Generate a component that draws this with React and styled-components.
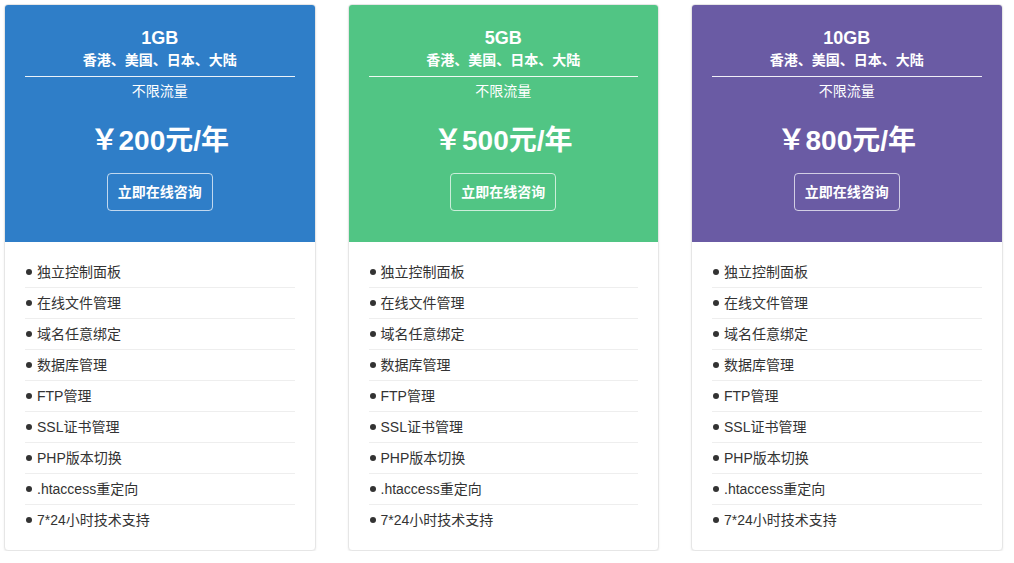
import React from 'react';
import styled, { createGlobalStyle } from 'styled-components';

const GlobalStyle = createGlobalStyle`
  body {
    margin: 0;
    background: #fff;
    font-family: "Liberation Sans", Arial, "Noto Sans CJK SC", sans-serif;
    color: #333;
  }
`;

const Page = styled.div`
  display: flex;
  gap: 32px;
  padding: 4px 0 0 4px;
`;

const Card = styled.div`
  width: 311.5px;
  box-sizing: border-box;
  border: 1px solid #e6e6e6;
  border-radius: 4px;
  box-shadow: 0 1px 2px rgba(0, 0, 0, 0.08);
  background: #fff;
  overflow: hidden;
`;

const Head = styled.div`
  background: ${p => p.$color};
  color: #fff;
  text-align: center;
  padding: 22px 20px 31px;
`;

const Size = styled.div`
  font-size: 18px;
  font-weight: bold;
  line-height: 22px;
`;

const Region = styled.div`
  font-size: 14px;
  font-weight: bold;
  line-height: 22px;
  padding-bottom: 5px;
  border-bottom: 1px solid rgba(255, 255, 255, 0.9);
`;

const Traffic = styled.div`
  font-size: 14px;
  line-height: 22px;
  margin-top: 3px;
`;

const Price = styled.div`
  font-size: 28px;
  font-weight: bold;
  line-height: 40px;
  margin-top: 19px;
`;

const Button = styled.a`
  display: inline-block;
  margin-top: 12px;
  height: 38px;
  line-height: 36px;
  box-sizing: border-box;
  padding: 0 10px;
  border: 1px solid rgba(255, 255, 255, 0.7);
  border-radius: 4px;
  font-size: 14px;
  font-weight: bold;
  color: #fff;
  cursor: pointer;
`;

const List = styled.ul`
  list-style: none;
  margin: 0;
  padding: 15px 20px 15px;
`;

const Item = styled.li`
  height: 30px;
  line-height: 30px;
  font-size: 14px;
  color: #333;
  border-bottom: 1px solid #eee;
  &:last-child {
    border-bottom: none;
  }
  &::before {
    content: "";
    display: inline-block;
    width: 6px;
    height: 6px;
    border-radius: 50%;
    background: #333;
    margin: 0 5px 2px 1px;
    vertical-align: middle;
  }
`;

const features = [
  '独立控制面板',
  '在线文件管理',
  '域名任意绑定',
  '数据库管理',
  'FTP管理',
  'SSL证书管理',
  'PHP版本切换',
  '.htaccess重定向',
  '7*24小时技术支持',
];

const plans = [
  { size: '1GB', price: '200', color: '#2f7ec8' },
  { size: '5GB', price: '500', color: '#51c584' },
  { size: '10GB', price: '800', color: '#6a5ba4' },
];

export default function App() {
  return (
    <>
      <GlobalStyle />
      <Page>
        {plans.map(plan => (
          <Card key={plan.size}>
            <Head $color={plan.color}>
              <Size>{plan.size}</Size>
              <Region>香港、美国、日本、大陆</Region>
              <Traffic>不限流量</Traffic>
              <Price>￥{plan.price}元/年</Price>
              <Button>立即在线咨询</Button>
            </Head>
            <List>
              {features.map(f => (
                <Item key={f}>{f}</Item>
              ))}
            </List>
          </Card>
        ))}
      </Page>
    </>
  );
}
